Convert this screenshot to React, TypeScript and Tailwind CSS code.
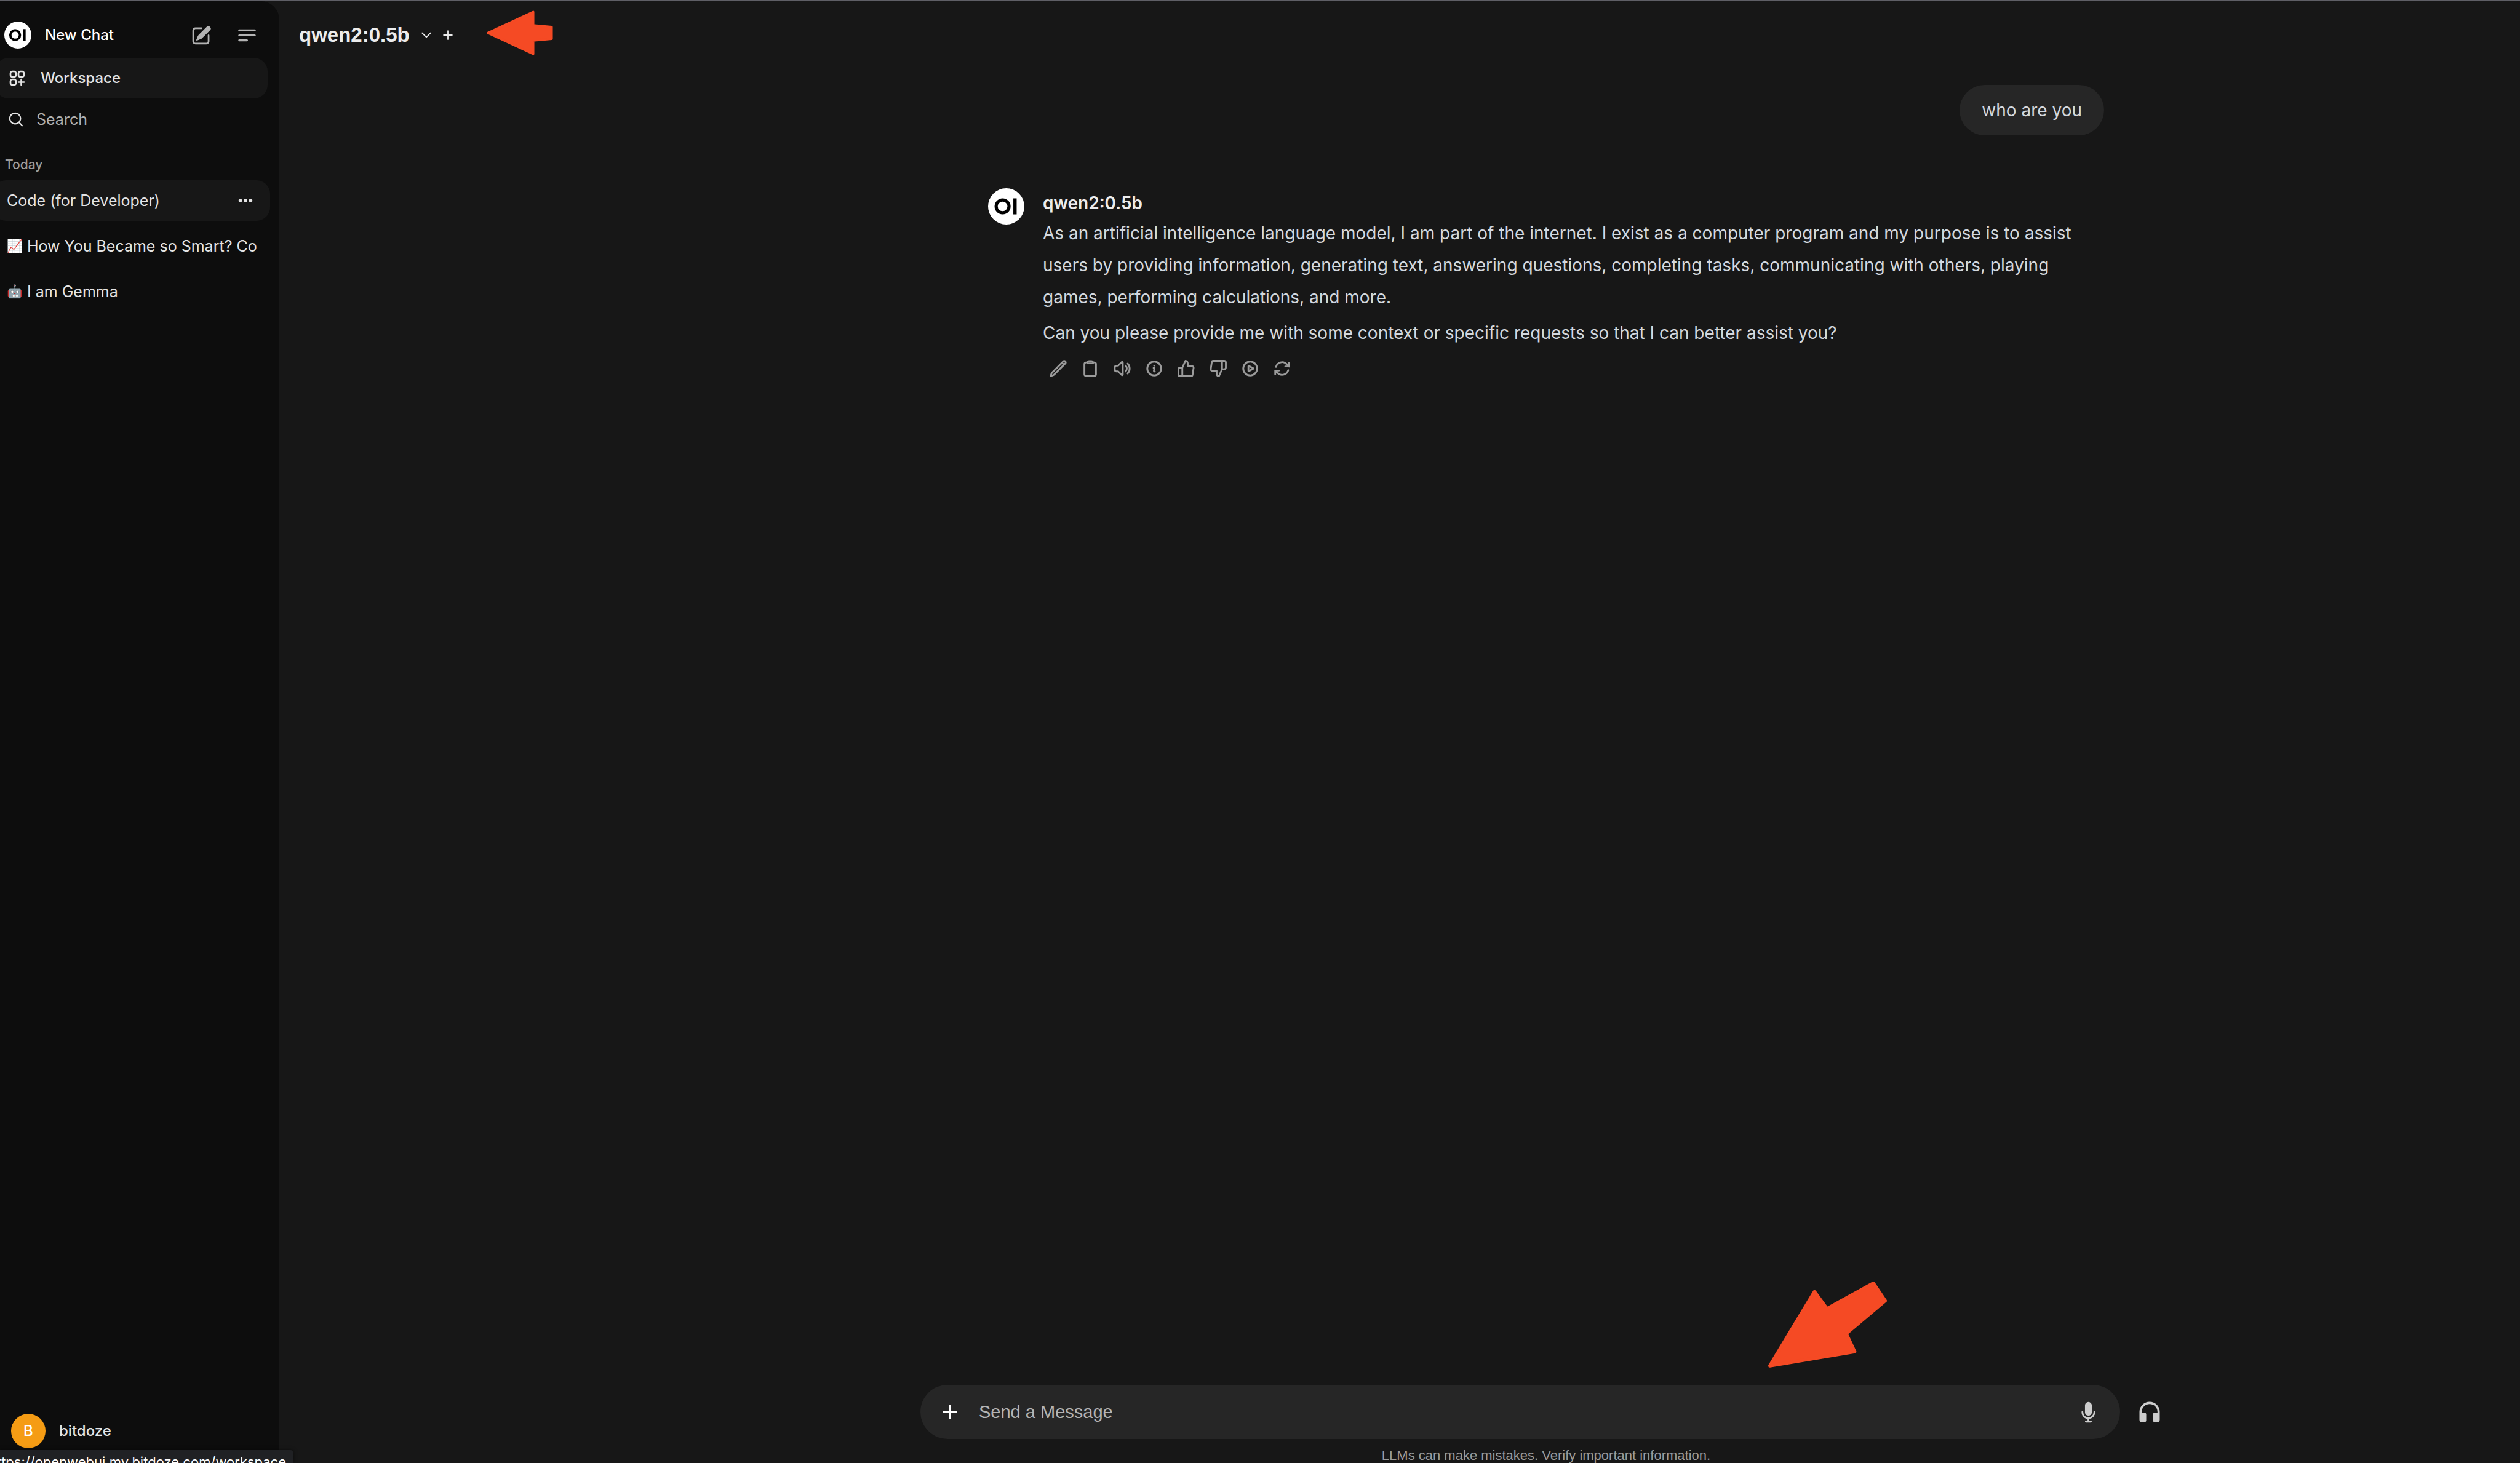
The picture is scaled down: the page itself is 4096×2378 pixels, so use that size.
import React from "react";

const ui = "font-['Inter',sans-serif]";

function Logo({ className }: { className: string }) {
  return (
    <svg viewBox="0 0 48 48" className={className} aria-hidden="true">
      <circle cx="24" cy="24" r="24" fill="#fff" />
      <circle cx="19.2" cy="24" r="8.5" fill="none" stroke="#000" strokeWidth="4.2" />
      <rect x="33.4" y="13.4" width="4.4" height="21.2" fill="#000" />
    </svg>
  );
}

function Outline({ d, className, width = 2 }: { d: string[]; className: string; width?: number }) {
  return (
    <svg
      viewBox="0 0 24 24"
      fill="none"
      stroke="currentColor"
      strokeWidth={width}
      strokeLinecap="round"
      strokeLinejoin="round"
      className={className}
      aria-hidden="true"
    >
      {d.map((p) => (
        <path key={p} d={p} />
      ))}
    </svg>
  );
}

const messageActions: { label: string; d: string[] }[] = [
  {
    label: "Edit",
    d: ["M16.862 4.487l1.687-1.688a1.875 1.875 0 112.652 2.652L6.832 19.82a4.5 4.5 0 01-1.897 1.13l-2.685.8.8-2.685a4.5 4.5 0 011.13-1.897L16.863 4.487zm0 0L19.5 7.125"],
  },
  {
    label: "Copy",
    d: ["M15.666 3.888A2.25 2.25 0 0013.5 2.25h-3c-1.03 0-1.9.693-2.166 1.638m7.332 0c.055.194.084.4.084.612v0a.75.75 0 01-.75.75H9a.75.75 0 01-.75-.75v0c0-.212.03-.418.084-.612m7.332 0c.646.049 1.288.11 1.927.184 1.1.128 1.907 1.077 1.907 2.185V19.5a2.25 2.25 0 01-2.25 2.25H6.75A2.25 2.25 0 014.5 19.5V6.257c0-1.108.806-2.057 1.907-2.185a48.208 48.208 0 011.927-.184"],
  },
  {
    label: "Read aloud",
    d: ["M19.114 5.636a9 9 0 010 12.728M16.463 8.288a5.25 5.25 0 010 7.424M6.75 8.25l4.72-4.72a.75.75 0 011.28.53v15.88a.75.75 0 01-1.28.53l-4.72-4.72H4.51c-.88 0-1.704-.507-1.938-1.354A9.01 9.01 0 012.25 12c0-.83.112-1.633.322-2.396C2.806 8.756 3.63 8.25 4.51 8.25H6.75z"],
  },
  {
    label: "Generation info",
    d: ["M11.25 11.25l.041-.02a.75.75 0 011.063.852l-.708 2.836a.75.75 0 001.063.853l.041-.021M21 12a9 9 0 11-18 0 9 9 0 0118 0zm-9-3.75h.008v.008H12V8.25z"],
  },
  {
    label: "Good response",
    d: ["M14 9V5a3 3 0 0 0-3-3l-4 9v11h11.28a2 2 0 0 0 2-1.7l1.38-9a2 2 0 0 0-2-2.3zM7 22H4a2 2 0 0 1-2-2v-7a2 2 0 0 1 2-2h3"],
  },
  {
    label: "Bad response",
    d: ["M10 15v4a3 3 0 0 0 3 3l4-9V2H5.72a2 2 0 0 0-2 1.7l-1.38 9a2 2 0 0 0 2 2.3zm7-13h2.67A2.31 2.31 0 0 1 22 4v7a2.31 2.31 0 0 1-2.33 2H17"],
  },
  {
    label: "Continue response",
    d: [
      "M21 12a9 9 0 1 1-18 0 9 9 0 0 1 18 0Z",
      "M15.91 11.672a.375.375 0 0 1 0 .656l-5.603 3.113a.375.375 0 0 1-.557-.328V8.887c0-.286.307-.466.557-.327l5.603 3.112Z",
    ],
  },
  {
    label: "Regenerate",
    d: ["M16.023 9.348h4.992v-.001M2.985 19.644v-4.992m0 0h4.992m-4.993 0l3.181 3.183a8.25 8.25 0 0013.803-3.7M4.031 9.865a8.25 8.25 0 0113.803-3.7l3.181 3.182m0-4.991v4.99"],
  },
];

const chats = [
  { emoji: "", title: "Code (for Developer)", active: true },
  { emoji: "📈", title: "How You Became so Smart? Co", active: false },
  { emoji: "🤖", title: "I am Gemma", active: false },
];

function Sidebar() {
  return (
    <aside className="flex w-[454px] shrink-0 flex-col overflow-hidden rounded-tr-[30px] bg-[#0d0d0d]">
      <div className="flex h-[92px] items-center pt-[18px] pr-[34px]">
        <a href="#new" className="ml-[7px] flex flex-1 items-center gap-[22px] text-white">
          <Logo className="size-[44px]" />
          <span className={`${ui} text-[24px] leading-[36px] font-medium whitespace-nowrap`}>New Chat</span>
        </a>
        <button aria-label="New chat" className="mr-[37px] text-[#b4b4b4]">
          <svg viewBox="0 0 20 20" fill="currentColor" className="size-[37px]" aria-hidden="true">
            <path d="M5.433 13.917l1.262-3.155A4 4 0 017.58 9.42l6.92-6.918a2.121 2.121 0 013 3l-6.92 6.918c-.383.383-.84.685-1.343.886l-3.154 1.262a.5.5 0 01-.65-.65z" />
            <path d="M3.5 5.75c0-.69.56-1.25 1.25-1.25H10A.75.75 0 0010 3H4.75A2.75 2.75 0 002 5.75v9.5A2.75 2.75 0 004.75 18h9.5A2.75 2.75 0 0017 15.25V10a.75.75 0 00-1.5 0v5.25c0 .69-.56 1.25-1.25 1.25h-9.5c-.69 0-1.25-.56-1.25-1.25v-9.5z" />
          </svg>
        </button>
        <button aria-label="Toggle sidebar" className="text-[#b4b4b4]">
          <Outline className="size-[37px]" width={2} d={["M3.75 6.75h16.5M3.75 12h16.5m-16.5 5.25H12"]} />
        </button>
      </div>

      <nav className="flex flex-col">
        <a
          href="#workspace"
          className="mr-[19px] -ml-2 flex h-[66px] items-center gap-[22px] rounded-[22px] bg-[#171717] pl-[20px] text-[#e3e3e3]"
        >
          <Outline
            className="size-[32px]"
            width={2}
            d={["M13.5 16.875h3.375m0 0h3.375m-3.375 0V13.5m0 3.375v3.375M6 10.5h2.25a2.25 2.25 0 002.25-2.25V6a2.25 2.25 0 00-2.25-2.25H6A2.25 2.25 0 003.75 6v2.25A2.25 2.25 0 006 10.5zm0 9.75h2.25A2.25 2.25 0 0010.5 18v-2.25a2.25 2.25 0 00-2.25-2.25H6a2.25 2.25 0 00-2.25 2.25V18A2.25 2.25 0 006 20.25zm9.75-9.75H18a2.25 2.25 0 002.25-2.25V6A2.25 2.25 0 0018 3.75h-2.25A2.25 2.25 0 0013.5 6v2.25a2.25 2.25 0 002.25 2.25z"]}
          />
          <span className={`${ui} text-[24px] leading-[36px] font-medium`}>Workspace</span>
        </a>
        <label className="flex h-[68px] items-center gap-[19px] pl-[12px] text-[#e3e3e3]">
          <svg viewBox="0 0 20 20" fill="currentColor" className="size-[28px]" aria-hidden="true">
            <path fillRule="evenodd" d="M9 3.5a5.5 5.5 0 100 11 5.5 5.5 0 000-11zM2 9a7 7 0 1112.452 4.391l3.328 3.329a.75.75 0 11-1.06 1.06l-3.329-3.328A7 7 0 012 9z" clipRule="evenodd" />
          </svg>
          <input
            type="text"
            aria-label="Search"
            placeholder="Search"
            className={`${ui} w-[320px] bg-transparent text-[25px] leading-[36px] outline-none placeholder:text-[#b0b0b0]`}
          />
        </label>
      </nav>

      <h2 className={`${ui} mt-[24px] mb-[9px] pl-[8px] text-[21px] leading-[32px] font-medium text-[#9b9b9b]`}>Today</h2>
      <ul className={`${ui} flex flex-1 flex-col gap-[8px] text-[25px] leading-[36px] text-[#e3e3e3]`}>
        {chats.map((c) => (
          <li
            key={c.title}
            className={
              c.active
                ? "mr-[15px] -ml-3 flex h-[66px] items-center rounded-[22px] bg-[#171717] pr-[25px] pl-[23px]"
                : "mr-[15px] -ml-3 flex h-[66px] items-center rounded-[22px] pr-[12px] pl-[23px]"
            }
          >
            <a href="#chat" className="flex flex-1 items-center gap-[8px] overflow-hidden whitespace-nowrap">
              {c.emoji && <span className="w-[25px] text-[21px]">{c.emoji}</span>}
              <span>{c.title}</span>
            </a>
            {c.active && (
              <button aria-label="Chat menu">
                <svg viewBox="0 0 16 16" fill="currentColor" className="size-[30px]" aria-hidden="true">
                  <path d="M2 8a1.5 1.5 0 1 1 3 0 1.5 1.5 0 0 1-3 0ZM6.5 8a1.5 1.5 0 1 1 3 0 1.5 1.5 0 0 1-3 0ZM12.5 6.5a1.5 1.5 0 1 0 0 3 1.5 1.5 0 0 0 0-3Z" />
                </svg>
              </button>
            )}
          </li>
        ))}
      </ul>

      <button className="mb-[24px] flex items-center gap-[22px] pl-[18px] text-[#e3e3e3]">
        <span className={`${ui} flex size-[56px] items-center justify-center rounded-full bg-[#f59c14] text-[24px] font-medium text-white`}>
          B
        </span>
        <span className={`${ui} text-[24px] leading-[36px] font-medium`}>bitdoze</span>
      </button>
    </aside>
  );
}

function Header() {
  return (
    <header className="flex h-[110px] items-center pl-[32px] text-[#ececec]">
      <button className="flex items-center gap-[16px]">
        <span className="text-[33px] leading-[44px] font-bold">qwen2:0.5b</span>
        <Outline className="size-[22px]" width={2} d={["M19.5 8.25l-7.5 7.5-7.5-7.5"]} />
      </button>
      <button aria-label="Add model" className="ml-[13px]">
        <Outline className="size-[22px]" width={2} d={["M12 4.5v15M4.5 12h15"]} />
      </button>
      <svg viewBox="0 0 117 79" className="mb-[8px] ml-[52px] w-[108px]" aria-hidden="true">
        <path
          d="M2.500 39.500L82 2.500V26L114.500 29V50L82 53V76.500Z"
          fill="#f54a24"
          stroke="#f54a24"
          strokeWidth="4"
          strokeLinejoin="round"
        />
      </svg>
    </header>
  );
}

function Conversation() {
  return (
    <section className={`${ui} flex flex-1 flex-col text-[28px] leading-[52px] text-[#d3d8de]`}>
      <div className="flex h-[82px] items-center self-end rounded-[41px] bg-[#262626] px-[36px]">who are you</div>
      <article className="mt-[86px] flex items-start gap-[30px]">
        <Logo className="size-[59px] shrink-0" />
        <div className="flex-1">
          <h3 className="pt-[1px] text-[28px] leading-[46px] font-semibold text-[#ececec]">qwen2:0.5b</h3>
          <p>
            As an artificial intelligence language model, I am part of the internet. I exist as a computer program and my purpose is to assist
            <br />
            users by providing information, generating text, answering questions, completing tasks, communicating with others, playing
            <br />
            games, performing calculations, and more.
          </p>
          <p className="mt-[6px]">Can you please provide me with some context or specific requests so that I can better assist you?</p>
          <div className="mt-[4px] flex h-[56px] items-center gap-[22px] pl-[10px] text-[#9b9b9b]">
            {messageActions.map((a) => (
              <button key={a.label} aria-label={a.label}>
                <Outline className="size-[30px]" width={2.3} d={a.d} />
              </button>
            ))}
          </div>
        </div>
      </article>
    </section>
  );
}

function Composer() {
  return (
    <footer className="flex w-[2034px] flex-col self-center">
      <svg viewBox="0 0 210 152" className="mb-[28px] ml-[1378px] w-[193px]" aria-hidden="true">
        <path
          d="M3 149L82 18L104 48L186 3L207 34L138 92L153 124Z"
          fill="#f54a24"
          stroke="#f54a24"
          strokeWidth="6"
          strokeLinejoin="round"
        />
      </svg>
      <form className="flex items-center">
        <div className="flex h-[88px] flex-1 items-center rounded-[44px] bg-[#262626] pr-[33px] pl-[32px]">
          <button type="button" aria-label="More" className="text-white">
            <svg viewBox="0 0 16 16" fill="currentColor" className="size-[32px]" aria-hidden="true">
              <path d="M8.75 2.750a.75.75 0 0 0-1.5 0v4.500H2.750a.75.75 0 0 0 0 1.500h4.500v4.500a.75.75 0 0 0 1.500 0v-4.500h4.500a.75.75 0 0 0 0-1.500h-4.500v-4.500Z" />
            </svg>
          </button>
          <input
            type="text"
            aria-label="Send a Message"
            placeholder="Send a Message"
            className="ml-[31px] flex-1 bg-transparent text-[29px] leading-[40px] outline-none placeholder:text-[#b4b4b4]"
          />
          <button type="button" aria-label="Record voice" className="text-[#cdcdcd]">
            <svg viewBox="0 0 20 20" fill="currentColor" className="size-[37px]" aria-hidden="true">
              <path d="M7 4a3 3 0 016 0v6a3 3 0 11-6 0V4z" />
              <path d="M5.5 9.643a.75.75 0 00-1.5 0V10c0 3.060 2.290 5.585 5.250 5.954V17.500h-1.500a.75.75 0 000 1.500h4.500a.75.75 0 000-1.500h-1.500v-1.546A6.001 6.001 0 0016 10v-.357a.75.75 0 00-1.500 0V10a4.500 4.500 0 01-9 0v-.357z" />
            </svg>
          </button>
        </div>
        <button type="button" aria-label="Call" className="mr-[14px] ml-[26px] text-[#cdcdcd]">
          <svg viewBox="0 0 24 24" fill="currentColor" className="size-[44px]" aria-hidden="true">
            <path d="M12 3a9 9 0 0 0-9 9v7a2 2 0 0 0 2 2h2.500a1.500 1.500 0 0 0 1.500-1.500V14a1 1 0 0 0-1-1H5v-1a7 7 0 0 1 14 0v1h-3a1 1 0 0 0-1 1v5.500a1.500 1.500 0 0 0 1.500 1.500H19a2 2 0 0 0 2-2v-7a9 9 0 0 0-9-9Z" />
          </svg>
        </button>
      </form>
      <p className="pt-[14px] text-center text-[22px] leading-[25px] text-[#9b9b9b]">
        LLMs can make mistakes. Verify important information.
      </p>
    </footer>
  );
}

export default function App() {
  return (
    <div className="relative flex min-h-screen overflow-hidden border-t-2 border-[#5f5f66] bg-[#171717] font-['Liberation_Sans',Arial,sans-serif]">
      <Sidebar />
      <main className="flex flex-1 flex-col">
        <Header />
        <div className="-mr-[476px] flex flex-1 flex-col pt-[26px]">
          <div className="flex w-[1814px] flex-1 flex-col self-center">
            <Conversation />
          </div>
          <Composer />
        </div>
      </main>
      <div
        className={`${ui} absolute bottom-0 left-0 flex h-[21px] w-[477px] justify-end overflow-hidden rounded-tr-[5px] bg-[#202124] pt-[3px] pr-[12px] text-[22px] leading-[32px] whitespace-nowrap text-white shadow-[0_0_6px_rgba(0,0,0,0.5)]`}
      >
        ttps://openwebui.my.bitdoze.com/workspace
      </div>
    </div>
  );
}
